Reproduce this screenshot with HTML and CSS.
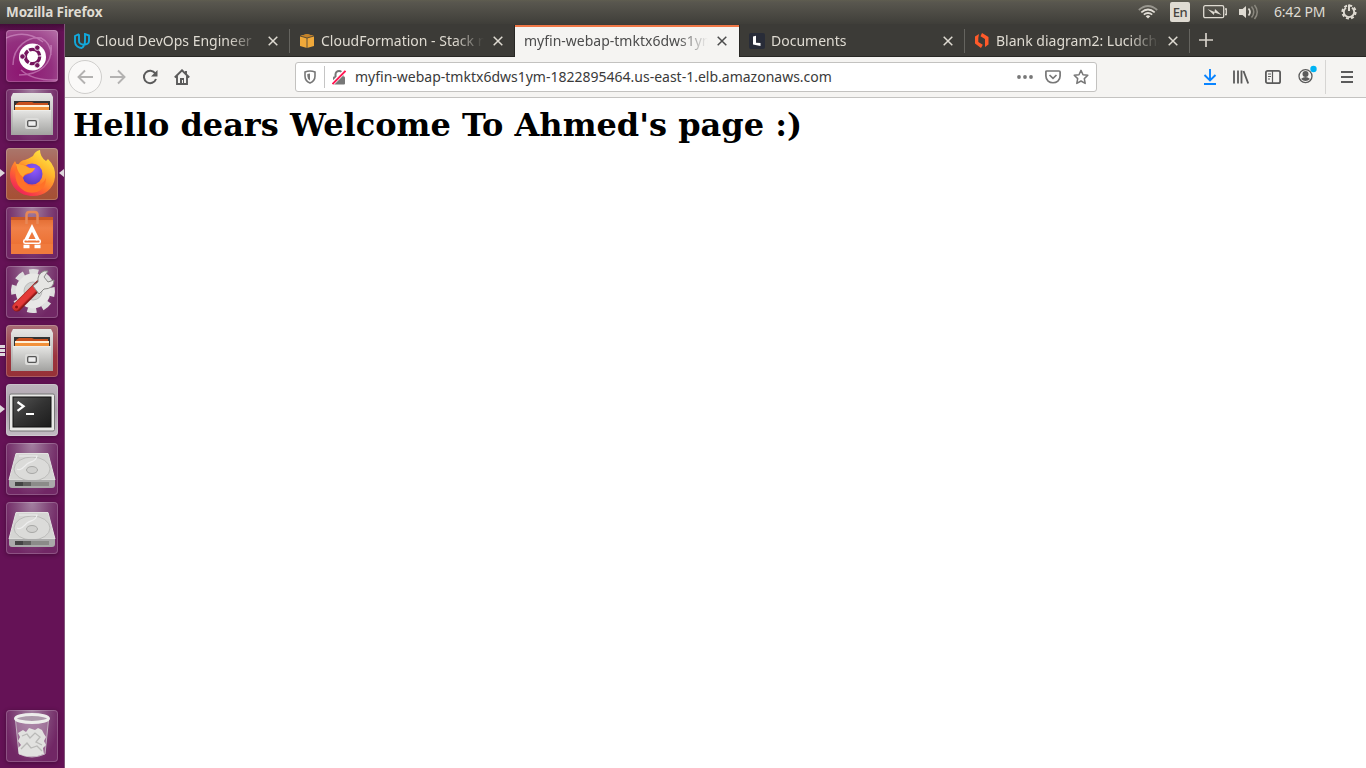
FILE: index.html
```html
<!DOCTYPE html>
<html lang="en">
<head>
<meta charset="utf-8">
<title>Mozilla Firefox</title>
<link rel="stylesheet" href="styles.css">
</head>
<body>
<svg class="defs" width="0" height="0" aria-hidden="true">
  <defs>
    <linearGradient id="metal" x1="0" y1="0" x2="0" y2="1"><stop offset="0" stop-color="#e6e6e4"/><stop offset="1" stop-color="#a2a2a0"/></linearGradient>
    <linearGradient id="bag" x1="0" y1="0" x2="0" y2="1"><stop offset="0" stop-color="#e06a30"/><stop offset=".3" stop-color="#f08048"/><stop offset="1" stop-color="#ea6a2a"/></linearGradient>
    <linearGradient id="fox" x1=".85" y1="0" x2=".2" y2="1"><stop offset="0" stop-color="#fff04a"/><stop offset=".35" stop-color="#ffb52c"/><stop offset=".65" stop-color="#ff6a30"/><stop offset="1" stop-color="#ee1660"/></linearGradient>
    <radialGradient id="globe" cx=".6" cy=".3" r=".7"><stop offset="0" stop-color="#9059ff"/><stop offset="1" stop-color="#5a3cc4"/></radialGradient>
    <linearGradient id="screen" x1="0" y1="0" x2="1" y2="1"><stop offset="0" stop-color="#555"/><stop offset=".5" stop-color="#333"/><stop offset="1" stop-color="#1c1c1c"/></linearGradient>
    <linearGradient id="red" x1="0" y1="0" x2="1" y2="1"><stop offset="0" stop-color="#f05048"/><stop offset="1" stop-color="#b01818"/></linearGradient>
  </defs>
  <symbol id="close" viewBox="0 0 10 10"><path d="M.7.7l8.6 8.6M9.3.7L.7 9.3" stroke="currentColor" stroke-width="1.5" fill="none"/></symbol>
  <symbol id="cabinet" viewBox="0 0 52 52">
    <path d="M7 4h38l2 4v38H5V8z" fill="url(#metal)"/>
    <path d="M8 12h36v10H8z" fill="#333"/>
    <path d="M10 15l3-2h13l2 1h14v8H10z" fill="#c8501c"/><path d="M9 16h34v2H9z" fill="#fff0d8"/><path d="M9 18h34v4H9z" fill="#f2913a"/>
    <path d="M7 21h38v25H7z" fill="url(#metal)"/><path d="M7 21.5h38" stroke="#ededeb"/>
    <rect x="19" y="29" width="14" height="11" rx="2" fill="#dcdcda"/><rect x="21.7" y="31.7" width="8.6" height="5.6" rx="1" fill="#eee" stroke="#555" stroke-width="1.3"/>
  </symbol>
  <symbol id="disk" viewBox="0 0 52 52">
    <path d="M10 10.500h32L49 37H3z" fill="#d5d5d3" stroke="#e4e4e2"/>
    <ellipse cx="26" cy="26" rx="18" ry="12" fill="#dbdbd9" stroke="#bcbcba"/>
    <path d="M13 13h18c-1 6-6 5-10 8-4 4-7 7-10 5" fill="none" stroke="#eee" stroke-width="1.2"/>
    <ellipse cx="26" cy="27" rx="5.500" ry="3.500" fill="#d0d0ce" stroke="#a8a8a6"/>
    <path d="M3 37h46v5q0 3-3 3H6q-3 0-3-3z" fill="#aaa"/><path d="M9 39h34v4H9z" fill="#8b8b89"/><path d="M9 39h8v4H9z" fill="#444"/><path d="M17 39h8v4h-8z" fill="#626260"/>
  </symbol>
</svg>

<header class="panel">
  <span class="panel-title">Mozilla Firefox</span>
  <div class="indicators">
    <svg class="wifi" width="20" height="14" viewBox="0 0 20 14" fill="none" stroke="#e2ded6" stroke-width="1.700"><path d="M.8 5Q10-3 19.200 5" stroke="#98968e"/><path d="M3.300 7.300q6.700-5.600 13.400 0M5.800 9.700q4.200-3.400 8.400 0"/><path d="M7.700 11.200q2.300-1.800 4.600 0L10 13.600z" fill="#e2ded6" stroke="none"/></svg>
    <span class="lang">En</span>
    <svg class="battery" width="24" height="14" viewBox="0 0 24 14"><rect x=".7" y=".7" width="20" height="12" rx="1.500" fill="none" stroke="#dfdbd2" stroke-width="1.300"/><path d="M22 4h1.300v5.500H22" fill="none" stroke="#dfdbd2" stroke-width="1.300"/><path d="M4.500 4l7 3 .5-3 6.500 6-7-2.500-.6 2.500z" fill="#dfdbd2"/></svg>
    <svg class="volume" width="21" height="16" viewBox="0 0 21 16"><path d="M1 5h3.500L8 2v12l-3.500-3H1z" fill="#dfdbd2"/><path d="M10.500 4.500q3 3.500 0 7" stroke="#dfdbd2" stroke-width="1.700" fill="none"/><path d="M13.500 2.500q4.500 5.500 0 11M16.500 1q5.500 7 0 14" stroke="#8b887f" stroke-width="1.500" fill="none"/></svg>
    <span class="clock">6:42 PM</span>
    <svg class="cog" width="18" height="18" viewBox="0 0 18 18" fill="none" stroke="#dfdbd2"><circle cx="9" cy="9" r="6.600" stroke-width="2" stroke-dasharray="3 2.180"/><path d="M6 4.700a5.200 5.200 0 1 0 6 0" stroke-width="1.900"/><path d="M9 1.500v6.500" stroke-width="2"/></svg>
  </div>
</header>

<div class="desktop">
  <nav class="launcher">
    <div class="tile dash"><svg viewBox="0 0 52 52"><g fill="none" stroke="#e9b5df" opacity=".45" stroke-width="1.500"><path d="M7 35C7 16 23 6 35 8q10 5 10 17M45 15c2 18-10 30-32 30M0 8q20-9 37 4M52 50Q27 51 15 40"/></g><circle cx="26.500" cy="27" r="13.500" fill="#fff"/><circle cx="26.500" cy="26.500" r="7.200" fill="none" stroke="#75145e" stroke-width="3.300" stroke-dasharray="13.800 1.280"/><g fill="#75145e" stroke="#fff" stroke-width=".8"><circle cx="16.500" cy="26.500" r="2.700"/><circle cx="31.300" cy="17.700" r="2.700"/><circle cx="31.300" cy="35.300" r="2.700"/></g></svg></div>
    <div class="tile glass"><svg><use href="#cabinet"/></svg></div>
    <div class="tile fire">
      <svg viewBox="0 0 52 52"><path d="M27 8q2-5 7-6 0 7 6 11l2-2q8 8 7 18C48 41 38 48 27 48 14 48 4 39 4 27c0-7 3-11 5-14q1 3 3 4 3-5 7-5c2-1 5-2 8-4z" fill="url(#fox)"/><circle cx="26" cy="26" r="10.500" fill="url(#globe)"/><path d="M10 18q6-3 11 0 2 3 8 2-2 5-7 6-4 1-5 4 2 9 12 8 8-1 11-8 0 11-9 14-12 3-19-7-4-7-2-19z" fill="#ff7128"/><path d="M10 16q8 0 11 3 3 2 8 1-2 5-7 5-4 1-5 4-5-3-7-13z" fill="#ffa62c"/></svg>
      <i class="pip-left"></i><i class="pip-right"></i>
    </div>
    <div class="tile glass"><svg viewBox="0 0 52 52"><path d="M5 10h42v37H5z" fill="url(#bag)"/><path d="M5 10h42v3H5z" fill="#c95828"/><path d="M20.500 17V8q0-3 3-3h5q3 0 3 3v9" fill="none" stroke="#e78857" stroke-width="2.500"/><path d="M5 37h42v10H5z" fill="#f07a3d"/><g fill="none" stroke="#fff" stroke-width="3.500"><path d="M20 33l6-12 6 12M17.500 39.500h6M28.500 39.500h6"/><rect x="17.700" y="32.700" width="16.600" height="3.600" rx="1.500" stroke-width="1.500"/></g></svg></div>
    <div class="tile glass"><svg viewBox="0 0 52 52"><circle cx="27" cy="25" r="19.500" fill="none" stroke="#dedede" stroke-width="5" stroke-dasharray="9 6.300" transform="rotate(-101 27 25)"/><circle cx="27" cy="25" r="13" fill="#bcbcba" stroke="#e8e8e6" stroke-width="9"/><circle cx="27" cy="25" r="9" fill="#d2d2d0" stroke="#bbb"/><path d="M11 41L34 18" stroke="#8c1818" stroke-width="9" stroke-linecap="round"/><path d="M10 41L29 22" stroke="url(#red)" stroke-width="7" stroke-linecap="round"/><path d="M10.500 40.500L28 23" stroke="#e43a38" stroke-width="5" stroke-linecap="round"/><path d="M27 20l5-4q-1-8 6-11l4 0-4 6 4 5 6-2q0 9-10 9l-5 5z" fill="#e6e6e4" stroke="#8a8a88"/><circle cx="10.500" cy="41" r="1.500" fill="#811"/></svg></div>
    <div class="tile glass open"><svg><use href="#cabinet"/></svg><i class="bars"></i></div>
    <div class="tile term"><svg viewBox="0 0 52 52"><rect x="3.500" y="10" width="45" height="37" rx="1.500" fill="#e8e8e6" stroke="#777"/><rect x="7" y="13" width="38" height="30" fill="url(#screen)" stroke="#111"/><path d="M11.500 18l6 4.300-6 4.500" fill="none" stroke="#fff" stroke-width="2.300"/><path d="M20 30h8" stroke="#fff" stroke-width="2"/></svg><i class="pip-left"></i></div>
    <div class="tile glass"><svg><use href="#disk"/></svg></div>
    <div class="tile glass"><svg><use href="#disk"/></svg></div>
    <div class="tile glass trash"><svg viewBox="0 0 52 52"><path d="M9.500 10L13 44q13 6 26 0l3.500-34" fill="#cbb1c7" fill-opacity=".4" stroke="#c4b3c1"/><path d="M13 44l-1-6 3-3-3-4 2-4-2-4 5-3 3 2 3-4 6 2 3-2 4 2 2 4 2 3-2 4 2 4-3 3 1 6q-13 5-25 0z" fill="#e1e1df"/><path d="M16 26l5-2 3 4 5-5 5 4-4 5 6 3M15 39l6-6 4 5 6-2 5 5" fill="none" stroke="#b9b9b7" stroke-width="1.300"/><ellipse cx="26" cy="8.500" rx="16.500" ry="4" fill="#ad9aab" stroke="#ededeb" stroke-width="3"/></svg></div>
  </nav>

  <main class="browser">
    <div class="tabs">
      <div class="tab first"><svg class="favicon" viewBox="0 0 16 16" fill="none" stroke="#12a9dc" stroke-width="1.900"><path d="M5 1.200L1 3v6c0 4 4 6 7 6"/><path d="M5 1.200V8c0 5 10 5 10 0V2.500L11 1v6.500c0 4-1 6-3 7.500"/></svg><span class="label t1">Cloud DevOps Engineer</span><svg class="x"><use href="#close"/></svg></div>
      <div class="tab"><svg class="favicon" viewBox="0 0 16 16"><path d="M1 3l7-2 7 2v10l-7 2-7-2z" fill="#f0a93a"/><path d="M1 3l7-2 7 2-7 2z" fill="#c38128"/><path d="M8 5v10M1 3l7 2 7-2" stroke="#3c3b37" stroke-width=".8" fill="none"/></svg><span class="label t2">CloudFormation - Stack myfin</span><svg class="x"><use href="#close"/></svg></div>
      <div class="tab active"><span class="label t3">myfin-webap-tmktx6dws1ym</span><svg class="x"><use href="#close"/></svg></div>
      <div class="tab docs"><svg class="favicon" viewBox="0 0 16 16"><rect width="16" height="16" rx="2" fill="#282c38"/><path d="M4 3.500l3-.8v7L11.500 10v3L4 11.500z" fill="#fff"/></svg><span class="label t4">Documents</span><svg class="x"><use href="#close"/></svg></div>
      <div class="tab"><svg class="favicon" viewBox="0 0 16 16"><path d="M5 1L1 3.500v7L7 15l1.800-3.300L4.300 9V5zM8 0l6.500 4v7.500L11 14v-8L6.500 3.300z" fill="#ff5a2a"/></svg><span class="label t5">Blank diagram2: Lucidchart</span><svg class="x"><use href="#close"/></svg></div>
      <svg class="new-tab" width="14" height="14" viewBox="0 0 14 14"><path d="M7 0v14M0 7h14" stroke="#d5d1c9" stroke-width="1.700"/></svg>
    </div>

    <div class="toolbar">
      <div class="nav">
        <span class="back"><svg width="16" height="16" viewBox="0 0 16 16"><path d="M8 1.500L1.500 8 8 14.500M2 8h14" stroke="#b3b2b1" stroke-width="1.900" fill="none"/></svg></span>
        <svg width="16" height="16" viewBox="0 0 16 16"><path d="M8 1.500L14.500 8 8 14.500M14 8H0" stroke="#b3b2b1" stroke-width="1.900" fill="none"/></svg>
        <svg width="16" height="16" viewBox="0 0 16 16"><path d="M13.300 4.500A6.200 6.200 0 1 0 14 10" stroke="#5b5b5b" stroke-width="2" fill="none"/><path d="M15.500 1v6.500H9z" fill="#5b5b5b"/></svg>
        <svg width="16" height="16" viewBox="0 0 16 16"><path d="M.8 8.500L8 1.300l7.200 7.200M3 7v8h10V7M12 2v3" stroke="#5b5b5b" stroke-width="1.900" fill="none"/><path d="M6 14V9h4v5H9v-3H8v3z" fill="#5b5b5b"/></svg>
      </div>
      <div class="url">
        <svg width="12" height="14" viewBox="0 0 12 14"><path d="M6 1C4 1 2.500 1.400 1 2v4q0 5 5 7 5-2 5-7V2C9.500 1.400 8 1 6 1z" fill="none" stroke="#777" stroke-width="1.600"/><path d="M6 3.500q-2 0-2.700.4V6q0 3 2.700 4.400z" fill="#777"/></svg>
        <i class="divider"></i>
        <svg class="lock" width="14" height="15" viewBox="0 0 14 15"><path d="M3.500 7V4.500a3.500 3.500 0 0 1 7 0V7" fill="none" stroke="#777" stroke-width="2"/><rect x="1" y="6.500" width="12" height="8" rx="1" fill="#777"/><path d="M0 14L13.500.5" stroke="#fff" stroke-width="4"/><path d="M.5 14L13.500.8" stroke="#ff1752" stroke-width="1.900"/></svg>
        <span class="address">myfin-webap-tmktx6dws1ym-1822895464.us-east-1.elb.amazonaws.com</span>
        <svg class="dots" width="16" height="4" viewBox="0 0 16 4" fill="#777"><circle cx="2" cy="2" r="1.900"/><circle cx="8" cy="2" r="1.900"/><circle cx="14" cy="2" r="1.900"/></svg>
        <svg class="pocket" width="16" height="14" viewBox="0 0 16 14" fill="none" stroke="#777" stroke-width="1.700"><path d="M2 1h12q1.100 0 1.100 1v4c0 9-14.200 9-14.200 0V2Q.9 1 2 1z"/><path d="M4.500 5L8 8.300 11.500 5"/></svg>
        <svg class="star" width="16" height="16" viewBox="0 0 16 16"><path d="M8 1.400l2 4.300 4.800.6-3.500 3.300.9 4.800L8 12l-4.200 2.400.9-4.800L1.200 6.300 6 5.700z" fill="none" stroke="#777" stroke-width="1.500" stroke-linejoin="round"/></svg>
      </div>
      <div class="actions">
        <svg width="14" height="16" viewBox="0 0 14 16"><path d="M7 0v11M1.500 6L7 11.500 12.500 6M1 15h12" stroke="#0a84ff" stroke-width="1.900" fill="none"/></svg>
        <svg width="16" height="14" viewBox="0 0 16 14"><path d="M1 .5v13M5 .5v13M8.500 .5v13M10.500 1l4.700 12.500" stroke="#5b5b5b" stroke-width="1.800" fill="none"/></svg>
        <svg width="16" height="14" viewBox="0 0 16 14"><rect x=".9" y=".9" width="14.200" height="12.200" rx="1.700" stroke="#5b5b5b" stroke-width="1.800" fill="none"/><path d="M7.500 1v12M3 4h3M3 6.500h3M3 9h2" stroke="#5b5b5b" stroke-width="1.200"/></svg>
        <svg width="20" height="20" viewBox="0 0 20 20"><circle cx="8.500" cy="11.200" r="6.500" fill="none" stroke="#5b5b5b" stroke-width="1.300"/><circle cx="8.500" cy="9" r="3" fill="#5b5b5b"/><path d="M4 14q4.500-4 9 0-4.500 4-9 0z" fill="#5b5b5b"/><circle cx="16.500" cy="4" r="3.200" fill="#00b3f4"/></svg>
        <i class="action-divider"></i>
        <svg width="12" height="12" viewBox="0 0 12 12"><path d="M0 1h12M0 6h12M0 11h12" stroke="#5b5b5b" stroke-width="1.800"/></svg>
      </div>
    </div>
    <article class="page"><h1>Hello dears Welcome To Ahmed's page :)</h1></article>
  </main>
</div>
</body>
</html>
```
FILE: styles.css
```css
* { box-sizing: border-box; }
html, body { margin: 0; height: 100%; overflow: hidden; }
body {
  display: flex;
  flex-direction: column;
  font: 14px/20px "Noto Sans", "Open Sans", sans-serif;
  background: #fff;
}
svg { display: block; flex: none; }
.defs { position: absolute; }

.panel {
  display: flex;
  justify-content: space-between;
  align-items: center;
  height: 24px;
  flex: none;
  padding: 0 8px 0 6px;
  color: #dfdbd2;
  background: linear-gradient(#5f5d50 0, #59574f 2px, #3f3e39 24px);
}
.panel-title { font-weight: 700; font-size: 13.500px; letter-spacing: -.1px; }
.indicators { display: flex; align-items: center; }
.lang {
  width: 20px;
  height: 20px;
  margin: 0 13px 0 12px;
  border-radius: 2px;
  background: #dfdbd2;
  color: #46443f;
  text-align: center;
  font: 500 13px/21px "Noto Sans", sans-serif;
  letter-spacing: -.5px;
}
.volume { margin-left: 11px; }
.clock { width: 54px; margin: 0 12px 0 15px; white-space: nowrap; letter-spacing: -.2px; }

.desktop { display: flex; flex: 1; min-height: 0; }
.launcher {
  display: flex;
  flex-direction: column;
  gap: 7px;
  width: 65px;
  flex: none;
  padding: 6px 6px;
  border-right: 1px solid #815579;
  background: linear-gradient(#430b38 0, #651256 8px, #651256 100%);
}
.tile {
  position: relative;
  width: 52px;
  height: 52px;
  flex: none;
  border-radius: 4px;
  box-shadow: inset 0 0 0 1px rgba(255,255,255,.2), 0 1px 4px rgba(30,0,25,.45);
}
.tile svg { width: 52px; height: 52px; }
.dash { background: radial-gradient(circle at 30% 80%, #8d1671, #93307f 55%, #b772a9); overflow: hidden; }
.glass { background: radial-gradient(ellipse at 50% 0, #a380a0 0, #82487a 45%, #712765 75%); }
.fire { background: linear-gradient(#aa776c, #aa5242 60%, #a55134); }
.open { background: linear-gradient(#a86c76, #9c343e 60%, #963137); }
.term { background: linear-gradient(#bdb4bd, #aaa0aa 50%, #c3bcc3); }
.trash { margin-top: auto; }
.pip-left, .pip-right, .bars { position: absolute; top: 21px; }
.pip-left { left: -6px; border: 4px solid transparent; border-left: 5px solid #ded8dc; border-right: 0; }
.pip-right { right: -6px; border: 4px solid transparent; border-right: 5px solid #ded8dc; border-left: 0; }
.bars { left: -6px; top: 20px; width: 5px; height: 11px; background: repeating-linear-gradient(#ded8dc 0 3px, transparent 3px 4px); }

.browser { display: flex; flex-direction: column; flex: 1; min-width: 0; }
.tabs {
  display: flex;
  height: 33px;
  flex: none;
  background: #3c3b37;
  box-shadow: inset 0 -1px #282724;
  color: #dfdbd2;
}
.tab {
  position: relative;
  display: flex;
  align-items: center;
  width: 225px;
  padding: 0 12px 0 9px;
}
.tab::after {
  content: "";
  position: absolute;
  right: 0;
  top: 5px;
  width: 1px;
  height: 24px;
  background: #65645f;
}
.tab:nth-child(2)::after, .active::after { display: none; }
.active { background: #f5f4f2; color: #4c4c4c; border-top: 2px solid #f07746; width: 224px; margin-top: 1px; padding-bottom: 3px; box-shadow: -1px 0 #282724, 1px 0 #282724; }
.docs { width: 226px; padding-left: 10px; }
.favicon { width: 16px; height: 16px; margin-right: 6px; }
.label {
  flex: 1;
  overflow: hidden;
  white-space: nowrap;
  margin-right: 9px;
  -webkit-mask: linear-gradient(to right, #000 calc(100% - 30px), transparent);
  mask: linear-gradient(to right, #000 calc(100% - 30px), transparent);
}
.x { width: 10px; height: 10px; }
.new-tab { margin: 9px 0 0 9px; }

.toolbar {
  display: flex;
  align-items: center;
  height: 41px;
  flex: none;
  background: #f5f4f2;
  border-bottom: 1px solid #c4c3c1;
}
.nav { display: flex; align-items: center; width: 230px; padding-left: 3px; gap: 16px; }
.back {
  display: grid;
  place-items: center;
  width: 34px;
  height: 34px;
  border: 1px solid #cfcecc;
  border-radius: 50%;
  background: #faf9f8;
  margin-right: -8px;
}
.url {
  display: flex;
  align-items: center;
  width: 802px;
  height: 30px;
  padding: 0 7px 0 8px;
  border: 1px solid #c3c2c0;
  border-radius: 3px;
  background: #fff;
  color: #3a3a3a;
}
.divider { width: 1px; height: 22px; margin: 0 7px 0 8px; background: #c5c5c5; }
.address { flex: 1; margin-left: 9px; white-space: nowrap; }
.dots { margin-right: 12px; }
.pocket { margin-right: 12px; }
.actions { display: flex; align-items: center; margin-left: 106px; gap: 16px; }
.actions svg:nth-of-type(4) { margin: -4px -4px 0 0; }
.action-divider { width: 1px; height: 34px; margin: 0 -1px 0 -4px; background: #d6d5d3; }
.page { flex: 1; padding: 8px; background: #fff; }
.page h1 {
  margin: 0;
  font: bold 32px/38px "DejaVu Serif", serif;
  color: #000;
  white-space: nowrap;
}
```
